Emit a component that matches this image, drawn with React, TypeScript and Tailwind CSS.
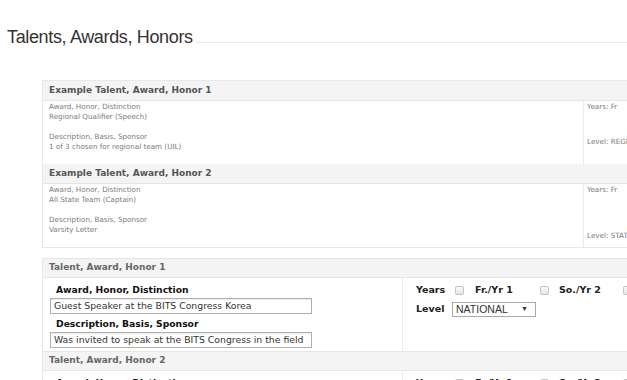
import React from 'react'

const examples = [
  {
    title: 'Example Talent, Award, Honor 1',
    award: 'Regional Qualifier (Speech)',
    desc: '1 of 3 chosen for regional team (UIL)',
    level: 'REGIONAL',
    levelGap: 'mt-[25px]',
  },
  {
    title: 'Example Talent, Award, Honor 2',
    award: 'All State Team (Captain)',
    desc: 'Varsity Letter',
    level: 'STATE',
    levelGap: 'mt-[36px]',
  },
]

const entries = [
  {
    title: 'Talent, Award, Honor 1',
    award: 'Guest Speaker at the BITS Congress Korea',
    desc: 'Was invited to speak at the BITS Congress in the field',
    level: 'NATIONAL',
  },
  {
    title: 'Talent, Award, Honor 2',
    award: '',
    desc: '',
    level: '',
  },
]

function Checkbox() {
  return (
    <span className="inline-block h-[9px] w-[9px] shrink-0 rounded-[2px] border border-[#c4c4c4] bg-gradient-to-b from-[#fafafa] to-[#e6e6e6]" />
  )
}

function ExampleCard({ item }: { item: (typeof examples)[number] }) {
  return (
    <div>
      <div className="flex h-[20px] items-center border-b border-[#e6e6e6] bg-[#f4f4f4] pl-[6px] text-[9px] font-bold text-[#555]">
        {item.title}
      </div>
      <div className="grid h-[63px] grid-cols-[540px_1fr]">
        <div className="pl-[6px] pt-[1px] text-[7.2px] leading-[10px] text-[#7a7a7a]">
          <div>Award, Honor, Distinction</div>
          <div>{item.award}</div>
          <div className="mt-[10px]">Description, Basis, Sponsor</div>
          <div>{item.desc}</div>
        </div>
        <div className="border-l border-[#ececec] pl-[3px] pt-[1px] text-[7.2px] leading-[10px] whitespace-nowrap text-[#7a7a7a]">
          <div>Years: Fr</div>
          <div className={item.levelGap}>Level: {item.level}</div>
        </div>
      </div>
    </div>
  )
}

function EntryRow({ item }: { item: (typeof entries)[number] }) {
  return (
    <div>
      <div className="flex h-[20px] items-center border-y border-[#e6e6e6] bg-[#f4f4f4] pl-[6px] text-[9px] font-bold text-[#666]">
        {item.title}
      </div>
      <div className="grid h-[73px] grid-cols-[359px_1fr]">
        <div className="pl-[7px] pt-[6px]">
          <div className="pl-[6px] text-[9.2px] leading-[12px] font-bold text-[#111]">
            Award, Honor, Distinction
          </div>
          <div className="mt-[2px] flex h-[16px] w-[262px] items-center border border-[#b0b0b0] pl-[3px] text-[9.3px] text-[#333] shadow-[inset_0_1px_1px_rgba(0,0,0,0.08)]">
            {item.award}
          </div>
          <div className="mt-[4px] pl-[6px] text-[9.2px] leading-[12px] font-bold text-[#111]">
            Description, Basis, Sponsor
          </div>
          <div className="mt-[2px] flex h-[16px] w-[262px] items-center border border-[#b0b0b0] pl-[3px] text-[9.3px] whitespace-nowrap text-[#333] shadow-[inset_0_1px_1px_rgba(0,0,0,0.08)]">
            {item.desc}
          </div>
        </div>
        <div className="border-l border-[#ececec] pl-[13px] pt-[6px] text-[9.5px] font-bold text-[#222]">
          <div className="flex h-[12px] items-center whitespace-nowrap">
            <span className="w-[39px]">Years</span>
            <Checkbox />
            <span className="ml-[11px] w-[65px]">Fr./Yr 1</span>
            <Checkbox />
            <span className="ml-[10px] w-[64px]">So./Yr 2</span>
            <Checkbox />
          </div>
          <div className="mt-[6px] flex items-center">
            <span className="w-[36px]">Level</span>
            <div className="flex h-[15px] w-[84px] items-center justify-between border border-[#a9a9a9] bg-white pl-[3px] pr-[7px] font-['Liberation_Sans',Arial,sans-serif] text-[10.5px] font-normal text-[#333]">
              <span>{item.level}</span>
              <span className="text-[7px]">▼</span>
            </div>
          </div>
        </div>
      </div>
    </div>
  )
}

export default function App() {
  return (
    <div className="h-[380px] w-[627px] overflow-hidden bg-white font-['DejaVu_Sans',Verdana,sans-serif]">
      {/* Page title */}
      <div className="flex pt-[27px] pl-[7px]">
        <h1 className="font-['Liberation_Sans',Arial,sans-serif] text-[18px] leading-[20px] tracking-[-0.35px] text-[#333]">
          Talents, Awards, Honors
        </h1>
        <div className="mb-[4px] ml-[3px] h-px flex-1 self-end bg-[#e8e8e8]" />
      </div>

      <div className="mt-[33px] ml-[42px] w-[640px]">
        {/* Examples */}
        <div className="border border-[#e8e8e8]">
          {examples.map((item) => (
            <ExampleCard key={item.title} item={item} />
          ))}
        </div>

        {/* Entry form */}
        <div className="mt-[10px] border-x border-[#e8e8e8]">
          {entries.map((item) => (
            <EntryRow key={item.title} item={item} />
          ))}
        </div>
      </div>
    </div>
  )
}
